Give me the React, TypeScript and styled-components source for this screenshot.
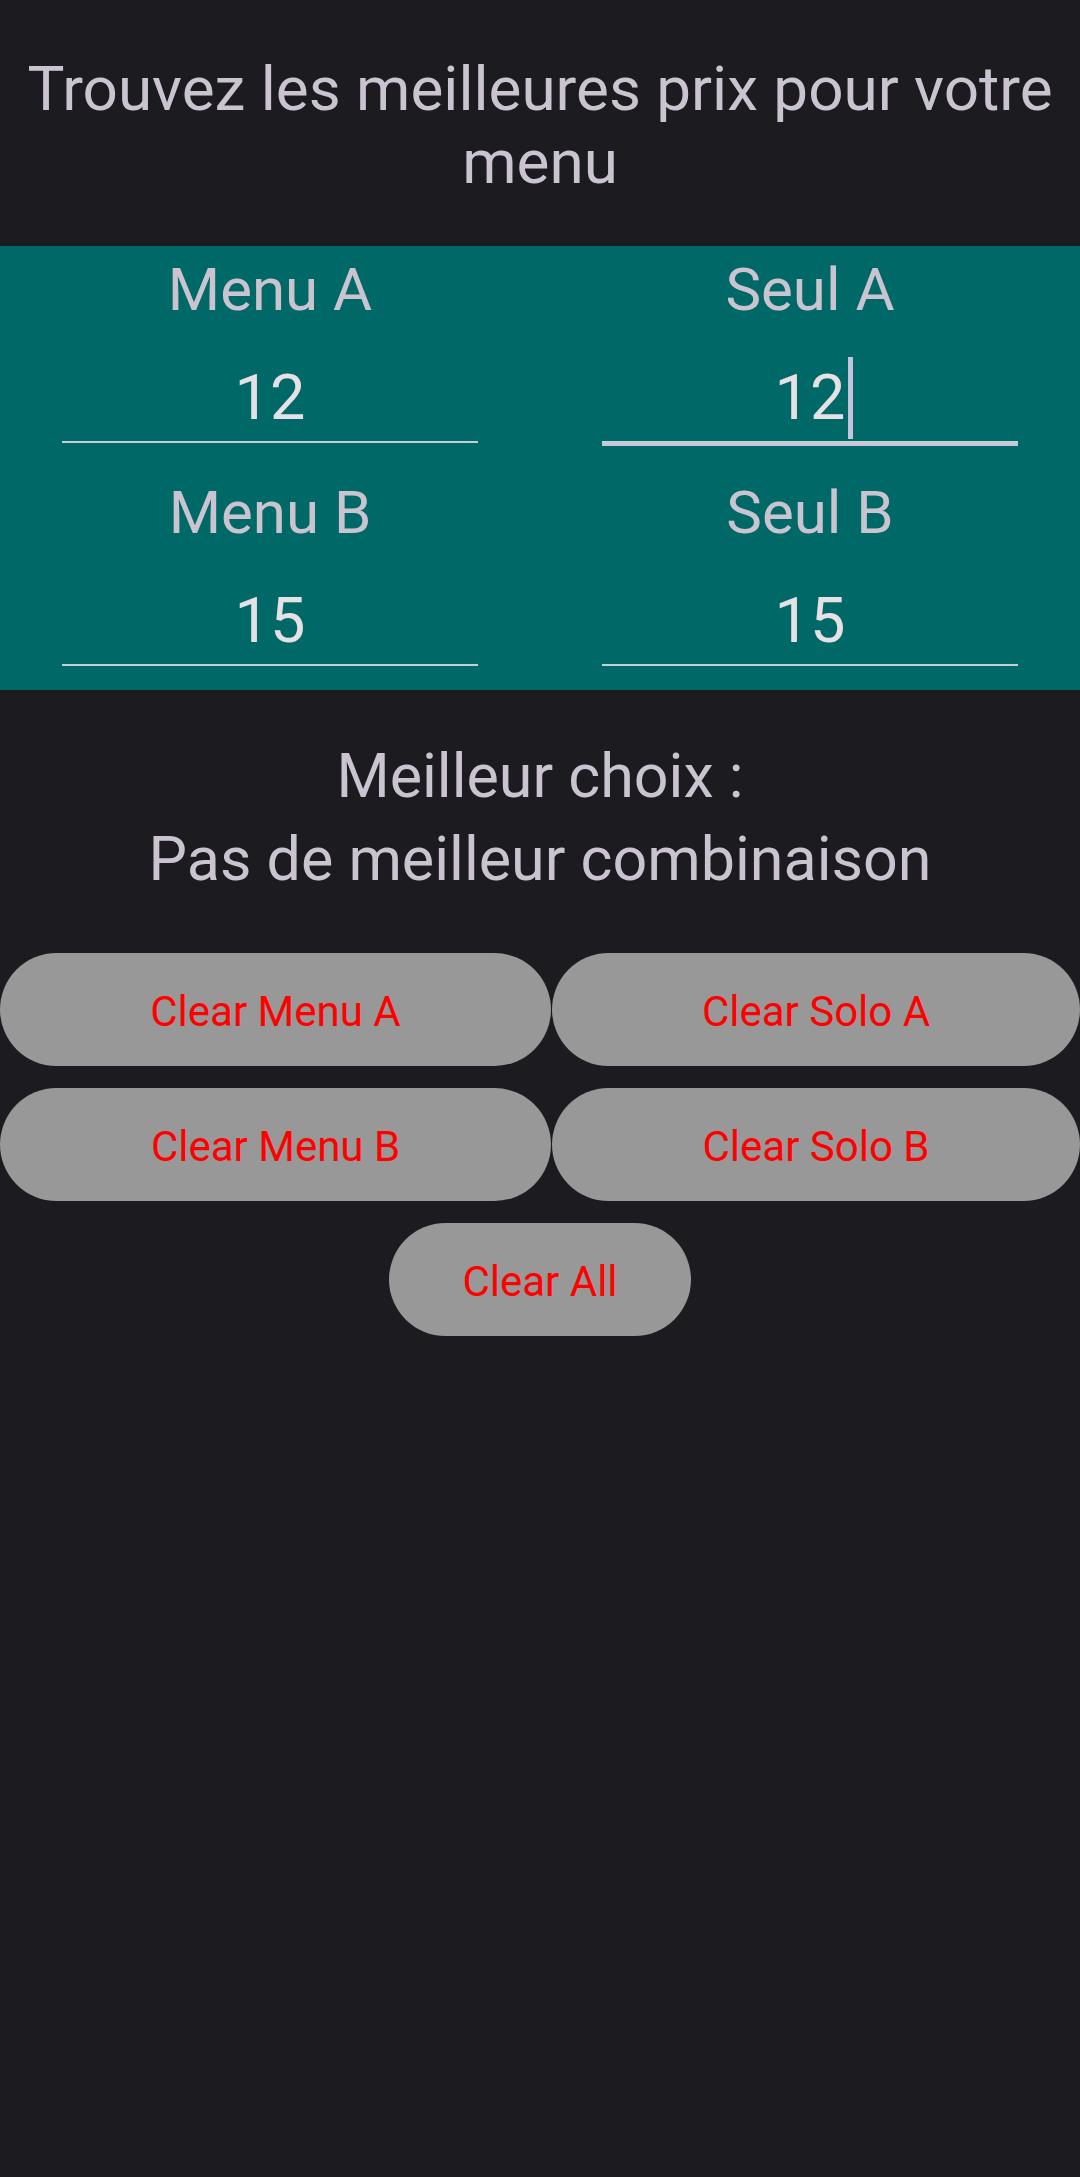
import React from "react";
import styled, { createGlobalStyle } from "styled-components";

const GlobalStyle = createGlobalStyle`
  html, body {
    margin: 0;
    padding: 0;
    background: #1c1b1f;
  }
  body {
    width: 1080px;
    min-height: 2177px;
    font-family: Roboto, "Noto Sans", sans-serif;
    -webkit-font-smoothing: antialiased;
  }
`;

const Screen = styled.div`
  width: 1080px;
  min-height: 2177px;
  background: #1c1b1f;
  display: flex;
  flex-direction: column;
`;

const Title = styled.h1`
  margin: 0;
  padding: 52px 10px 48px;
  font-size: 62px;
  line-height: 73px;
  font-weight: 400;
  color: #cac4d0;
  text-align: center;
`;

const Panel = styled.section`
  background: #006866;
  height: 444px;
  box-sizing: border-box;
  padding-top: 9px;
  display: grid;
  grid-template-columns: 1fr 1fr;
  grid-auto-rows: 214px;
  row-gap: 9px;
`;

const Field = styled.div`
  display: flex;
  flex-direction: column;
  align-items: stretch;
  padding: 0 62px;
`;

const Label = styled.label`
  font-size: 60px;
  line-height: 70px;
  color: #cac4d0;
  text-align: center;
`;

const ValueBox = styled.div<{ $focused?: boolean }>`
  margin-top: 38px;
  height: 80px;
  box-sizing: border-box;
  padding-bottom: 7px;
  display: flex;
  justify-content: center;
  align-items: flex-end;
  border-bottom: 2px solid #c3d1d4;
  box-shadow: ${(p) => (p.$focused ? "0 3px 0 #c9c5dd" : "none")};
`;

const ValueText = styled.span`
  position: relative;
  font-size: 63px;
  line-height: 73px;
  color: #e6e1e5;
`;

const Caret = styled.span`
  position: absolute;
  left: calc(100% + 3px);
  top: -4px;
  width: 5px;
  height: 82px;
  background: #c6c3dc;
`;

const Result = styled.p`
  margin: 0;
  padding-top: 45px;
  font-size: 61px;
  line-height: 83px;
  color: #cac4d0;
  text-align: center;
`;

const Buttons = styled.div`
  margin-top: 52px;
  display: flex;
  flex-direction: column;
  gap: 22px;
`;

const ButtonRow = styled.div<{ $center?: boolean }>`
  display: flex;
  gap: 1px;
  justify-content: ${(p) => (p.$center ? "center" : "flex-start")};
`;

const ClearButton = styled.button<{ $width?: number }>`
  flex: ${(p) => (p.$width ? `0 0 ${p.$width}px` : "1 1 0")};
  height: 113px;
  border: none;
  border-radius: 57px;
  background: #989898;
  color: #f00;
  font-family: Roboto, "Noto Sans", sans-serif;
  font-size: 42px;
  padding: 4px 0 0;
  cursor: pointer;
`;

export default function App() {
  return (
    <Screen>
      <GlobalStyle />
      <Title>
        Trouvez les meilleures prix pour votre
        <br />
        menu
      </Title>
      <Panel>
        <Field>
          <Label>Menu A</Label>
          <ValueBox>
            <ValueText>12</ValueText>
          </ValueBox>
        </Field>
        <Field>
          <Label>Seul A</Label>
          <ValueBox $focused>
            <ValueText>
              12
              <Caret />
            </ValueText>
          </ValueBox>
        </Field>
        <Field>
          <Label>Menu B</Label>
          <ValueBox>
            <ValueText>15</ValueText>
          </ValueBox>
        </Field>
        <Field>
          <Label>Seul B</Label>
          <ValueBox>
            <ValueText>15</ValueText>
          </ValueBox>
        </Field>
      </Panel>
      <Result>
        Meilleur choix :
        <br />
        Pas de meilleur combinaison
      </Result>
      <Buttons>
        <ButtonRow>
          <ClearButton $width={551}>Clear Menu A</ClearButton>
          <ClearButton>Clear Solo A</ClearButton>
        </ButtonRow>
        <ButtonRow>
          <ClearButton $width={551}>Clear Menu B</ClearButton>
          <ClearButton>Clear Solo B</ClearButton>
        </ButtonRow>
        <ButtonRow $center>
          <ClearButton $width={302}>Clear All</ClearButton>
        </ButtonRow>
      </Buttons>
    </Screen>
  );
}
